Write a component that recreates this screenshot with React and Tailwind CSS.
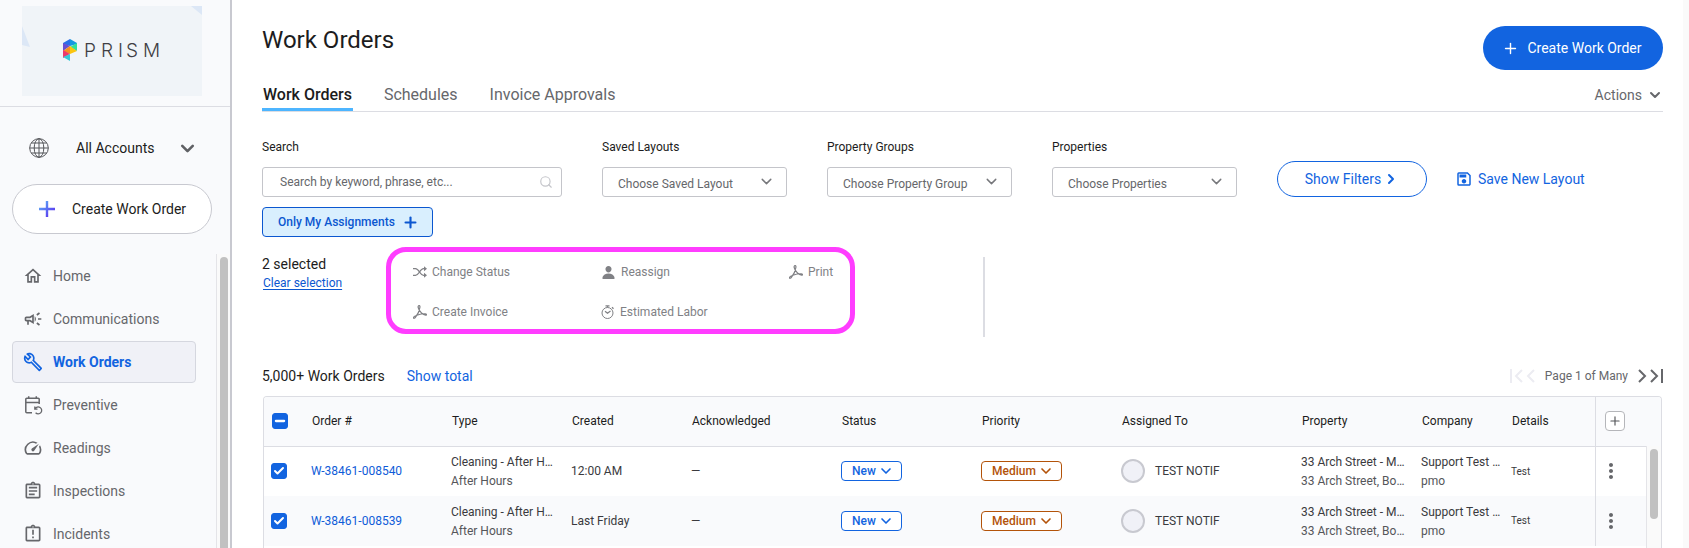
import { useState } from 'react';
import clsx from 'clsx';
import {
  MdOutlineHome,
  MdOutlineCampaign,
  MdOutlineBuild,
  MdOutlineSpeed,
  MdOutlineAssignment,
  MdOutlineAssignmentLate,
  MdOutlineSave,
  MdMoreVert,
} from 'react-icons/md';
import { IoPerson } from 'react-icons/io5';
import { Check, ChevronDown, ChevronRight, Minus, Plus, Search } from 'lucide-react';

const navItems = [
  { label: 'Home', icon: MdOutlineHome },
  { label: 'Communications', icon: MdOutlineCampaign },
  { label: 'Work Orders', icon: MdOutlineBuild, active: true },
  { label: 'Preventive', icon: CalendarRepeatIcon },
  { label: 'Readings', icon: MdOutlineSpeed },
  { label: 'Inspections', icon: MdOutlineAssignment },
  { label: 'Incidents', icon: MdOutlineAssignmentLate },
];

const tabs = ['Work Orders', 'Schedules', 'Invoice Approvals'];

const filters = [
  { id: 'layouts', label: 'Saved Layouts', placeholder: 'Choose Saved Layout' },
  { id: 'groups', label: 'Property Groups', placeholder: 'Choose Property Group' },
  { id: 'properties', label: 'Properties', placeholder: 'Choose Properties' },
];

const columns = [
  { label: 'Order #', width: 'w-[140px]' },
  { label: 'Type', width: 'w-[120px]' },
  { label: 'Created', width: 'w-[120px]' },
  { label: 'Acknowledged', width: 'w-[150px]' },
  { label: 'Status', width: 'w-[140px]' },
  { label: 'Priority', width: 'w-[140px]' },
  { label: 'Assigned To', width: 'w-[180px]' },
  { label: 'Property', width: 'w-[120px]' },
  { label: 'Company', width: 'w-[90px]' },
  { label: 'Details', width: '' },
];

const orders = [
  { id: 'W-38461-008540', created: '12:00 AM' },
  { id: 'W-38461-008539', created: 'Last Friday' },
];

function PrismMark() {
  return (
    <svg width="98" height="24" viewBox="0 0 98 24" role="img" aria-label="Prism">
      <polygon points="7,0 0,4 0,5 7,7" fill="#2a6fe8" />
      <polygon points="7,0 14,4 14,5 7,7" fill="#1599e0" />
      <polygon points="0,4 7,7 0,12" fill="#6a4fd0" />
      <polygon points="14,4 14,12 7,8" fill="#2fe29a" />
      <polygon points="7,7 0,12 7,15" fill="#f7901e" />
      <polygon points="7,7 14,12 7,15" fill="#fbc50f" />
      <polygon points="0,11 7,15 0,19" fill="#ec3a6c" />
      <polygon points="7,15 7,22 0,18" fill="#35c9d6" />
      <text
        x="21 38 55 63 80"
        y="18"
        fill="#3f3f44"
        fontFamily="Inter, sans-serif"
        fontWeight="300"
        fontSize="19"
      >
        PRISM
      </text>
    </svg>
  );
}

function GlobeIcon() {
  return (
    <svg width="20" height="20" viewBox="0 0 20 20" fill="none" stroke="#55565a">
      <circle cx="10" cy="10" r="9.3" />
      <ellipse cx="10" cy="10" rx="4.8" ry="9.3" />
      <path d="M10 .7v18.6M.7 10h18.6M2.4 5h15.2M2.4 15h15.2" />
    </svg>
  );
}

function CalendarRepeatIcon({ size }) {
  return (
    <svg width={size} height={size} viewBox="0 0 20 20" fill="none" stroke="currentColor" strokeWidth="1.5">
      <path d="M9 17.700H3.800a1 1 0 0 1-1-1V4.300a1 1 0 0 1 1-1h11.400a1 1 0 0 1 1 1V9M2.800 7.500h13.400M5.700 1.200v2.500M13.300 1.200v2.500" />
      <path d="M11.800 11.500v2.700h2.700M12 14a3.500 3.500 0 1 1 .6 3.800" strokeWidth="1.300" />
    </svg>
  );
}

function ShuffleIcon() {
  return (
    <svg width="14" height="14" viewBox="0 0 14 14" fill="none" stroke="#808185" strokeWidth="1.300">
      <path d="M0 3.700h2.500c3.500 0 4.500 6.600 8 6.600h2M0 10.300h2.500c3.500 0 4.500-6.600 8-6.600h2" />
      <path d="M11 1.200L14 3.700l-3 2.500zM11 7.800l3 2.500-3 2.500z" fill="#808185" stroke="none" />
    </svg>
  );
}

function PdfIcon() {
  return (
    <svg width="14" height="14" viewBox="0 0 14 14" fill="none" stroke="#808185" strokeWidth="1.2">
      <path d="M5.6.7c1-.5 1.5.3 1.3 1.6C6.500 5.200 4.400 10 2.400 12.400c-.7.9-1.700 1.200-1.900.6-.3-1 2-2.300 4.200-3 2.600-.9 5.600-1.400 7.500-1.200 1.600.2 1.600 1.300.5 1.400C10 10.300 6 6 5.200 2.500c-.2-.9-.1-1.500.4-1.800z" />
    </svg>
  );
}

function TimerIcon() {
  return (
    <svg width="14" height="14" viewBox="0 0 14 14" fill="none" stroke="#808185">
      <circle cx="6.500" cy="8" r="5.500" />
      <path d="M4.500.8h4M6.500.8v1.700M11 2.200l1.500 1.500M4 6.200l2.500 2 3-2.200" strokeWidth="1.300" />
    </svg>
  );
}

function PageIcon({ last, flip, className }) {
  return (
    <svg
      width={last ? 14 : 10}
      height="14"
      viewBox={last ? '0 0 14 14' : '0 0 10 14'}
      fill="none"
      stroke="currentColor"
      strokeWidth="2"
      className={clsx(flip && 'rotate-180', className)}
    >
      <path d={last ? 'M2 1l6 6-6 6M13 0v14' : 'M2 1l6 6-6 6'} />
    </svg>
  );
}

const bulkActions = [
  { label: 'Change Status', icon: <ShuffleIcon /> },
  { label: 'Reassign', icon: <IoPerson size={15} /> },
  { label: 'Print', icon: <PdfIcon /> },
  { label: 'Create Invoice', icon: <PdfIcon /> },
  { label: 'Estimated Labor', icon: <TimerIcon /> },
];

function Sidebar() {
  return (
    <aside className="flex w-[232px] shrink-0 flex-col border-r-2 border-[#c8c9d0] bg-[#f9fafc]">
      <div className="border-b border-[#dcdde3] pt-[6px] pb-[10px] pl-[22px]">
        <div className="relative flex h-[90px] w-[180px] items-center justify-center overflow-hidden bg-[#f0f4f8]">
          <svg className="absolute inset-0" width="180" height="90" fill="#dce7f6">
            <polygon points="169,0 180,0 180,9" />
            <polygon points="0,20 8,41 0,39" />
          </svg>
          <PrismMark />
        </div>
      </div>

      <button className="mt-[25px] flex h-8 items-center pl-[29px] text-sm text-[#1c1c20]">
        <GlobeIcon />
        <span className="ml-[27px] w-[101px] text-left">All Accounts</span>
        <ChevronDown size={21} strokeWidth={3} className="text-[#5f6064]" />
      </button>

      <button className="mx-3 mt-5 flex h-[50px] w-[200px] items-center rounded-full border border-[#c8c9d0] bg-white pl-[26px] text-sm text-[#1c1c20]">
        <svg width="16" height="16" viewBox="0 0 16 16">
          <defs>
            <linearGradient id="plus" x1="0" y1="0" x2="1" y2="1">
              <stop offset="0.2" stopColor="#5b9df5" />
              <stop offset="0.8" stopColor="#5b3df0" />
            </linearGradient>
          </defs>
          <path d="M6.800 0h2.400v6.800H16v2.400H9.200V16H6.800V9.200H0V6.800h6.800z" fill="url(#plus)" />
        </svg>
        <span className="ml-[17px]">Create Work Order</span>
      </button>

      <div className="mt-5 flex min-h-0 flex-1">
        <nav className="flex flex-1 flex-col gap-px overflow-hidden pt-px pr-5 pl-3">
          {navItems.map(({ label, icon: Icon, active }) => (
            <a
              key={label}
              href="#"
              className={clsx(
                'flex h-[42px] shrink-0 items-center gap-[10px] rounded border pl-[10px] text-sm',
                active
                  ? 'border-[#d5d7df] bg-[#f0f1f7] font-bold text-[#1264e0]'
                  : 'border-transparent text-[#66676b]'
              )}
            >
              <Icon size={20} />
              {label}
            </a>
          ))}
        </nav>
        <div className="w-[14px] border-l border-[#e4e4e8] bg-[#fafafa] pt-[3px] pl-[3px]">
          <div className="h-full w-2 rounded-t-full bg-[#c1c1c1]" />
        </div>
      </div>
    </aside>
  );
}

function Filters() {
  return (
    <div className="mt-[27px] flex items-end gap-10 text-xs">
      <div className="w-[300px]">
        <label htmlFor="search" className="block text-[#1c1c20]">Search</label>
        <div className="mt-3 flex h-[30px] items-center rounded-[3px] border border-[#c4c5ca] pr-2 pl-[17px]">
          <input
            id="search"
            type="text"
            placeholder="Search by keyword, phrase, etc..."
            className="min-w-0 flex-1 outline-none placeholder:text-[#66676b]"
          />
          <Search size={14} className="text-[#c4c5ca]" />
        </div>
      </div>
      {filters.map((filter) => (
        <div key={filter.id} className="w-[185px]">
          <label htmlFor={filter.id} className="block text-[#1c1c20]">{filter.label}</label>
          <div className="relative mt-3">
            <select
              id={filter.id}
              className="h-[30px] w-full appearance-none rounded-[3px] border border-[#c4c5ca] bg-white pt-1 pl-[15px] text-[#66676b]"
            >
              <option>{filter.placeholder}</option>
            </select>
            <ChevronDown size={17} className="pointer-events-none absolute top-[6px] right-3 text-[#77787c]" />
          </div>
        </div>
      ))}
      <div className="flex items-center gap-7 text-sm text-[#1264e0]">
        <button className="flex h-9 w-[150px] items-center justify-center gap-[2px] rounded-full border border-[#1264e0]">
          Show Filters
          <ChevronRight size={16} strokeWidth={3} />
        </button>
        <button className="flex items-center gap-[5px]">
          <MdOutlineSave size={18} />
          Save New Layout
        </button>
      </div>
    </div>
  );
}

function Checkbox({ checked, mixed, onChange, label }) {
  return (
    <label className="relative block size-4">
      <input
        type="checkbox"
        aria-label={label}
        checked={checked}
        onChange={onChange}
        className="block size-4 appearance-none rounded-[3px] border border-[#1264e0] checked:bg-[#1264e0]"
      />
      {checked && (
        <span className="pointer-events-none absolute inset-0 flex items-center justify-center text-white">
          {mixed ? <Minus size={14} strokeWidth={4} /> : <Check size={12} strokeWidth={4} />}
        </span>
      )}
    </label>
  );
}

function OrdersTable() {
  const [selected, setSelected] = useState([0, 1]);

  const toggle = (i) =>
    setSelected(selected.includes(i) ? selected.filter((n) => n !== i) : [...selected, i]);

  return (
    <div className="relative mx-px mt-[10px] flex-1 overflow-hidden rounded-t border border-b-0 border-[#dcdde3]">
      <table className="w-full table-fixed text-left text-xs whitespace-nowrap text-[#3a3a3e]">
        <thead>
          <tr className="h-[49px] border-b border-[#dcdde3] bg-[#f9fafc] text-[#1c1c20]">
            <th className="w-[38px] pl-2">
              <Checkbox
                label="Select all"
                checked={selected.length > 0}
                mixed
                onChange={() => setSelected([])}
              />
            </th>
            {columns.map((col) => (
              <th key={col.label} className={clsx('pl-[10px] font-normal', col.width)}>{col.label}</th>
            ))}
            <th className="w-[66px] border-l border-[#dcdde3] pl-[9px]">
              <button
                aria-label="Add column"
                className="flex size-5 items-center justify-center rounded border border-[#b5b6ba] bg-white text-[#55565a]"
              >
                <Plus size={14} />
              </button>
            </th>
          </tr>
        </thead>
        <tbody>
          {orders.map((order, i) => (
            <tr key={order.id} className="h-[50px] even:bg-[#f9fafc]">
              <td className="pl-[7px]">
                <Checkbox
                  label={`Select ${order.id}`}
                  checked={selected.includes(i)}
                  onChange={() => toggle(i)}
                />
              </td>
              <td className="pl-[9px]">
                <a href="#" className="text-[#0f5cd8]">{order.id}</a>
              </td>
              <td className="pt-[2px] pl-[9px] leading-[19px]">
                <div>Cleaning - After H…</div>
                <div className="text-[#55565a]">After Hours</div>
              </td>
              <td className="pl-[9px]">{order.created}</td>
              <td className="pl-[9px]">—</td>
              <td className="pl-[9px]">
                <button className="flex h-5 items-center gap-[2px] rounded border border-[#1264e0] bg-white pr-[7px] pl-[10px] font-medium text-[#1264e0]">
                  New
                  <ChevronDown size={16} strokeWidth={2.5} />
                </button>
              </td>
              <td className="pl-[9px]">
                <button className="flex h-5 items-center gap-[2px] rounded border border-[#b35309] bg-white pr-[7px] pl-[10px] font-medium text-[#b35309]">
                  Medium
                  <ChevronDown size={16} strokeWidth={2.5} />
                </button>
              </td>
              <td className="pl-[9px]">
                <div className="flex items-center gap-[10px]">
                  <span className="size-6 rounded-full border-2 border-[#c8c9d0] bg-[#f0f1f7]" />
                  TEST NOTIF
                </div>
              </td>
              <td className="pt-[2px] pl-[9px] leading-[19px]">
                <div>33 Arch Street - M…</div>
                <div className="text-[#55565a]">33 Arch Street, Bo…</div>
              </td>
              <td className="pt-[2px] pl-[9px] leading-[19px]">
                <div>Support Test …</div>
                <div className="text-[#55565a]">pmo</div>
              </td>
              <td className="pl-[9px] text-[10px]">Test</td>
              <td className="border-l border-[#dcdde3] pl-[3px]">
                <button aria-label="More" className="block text-[#66676b]">
                  <MdMoreVert size={24} />
                </button>
              </td>
            </tr>
          ))}
        </tbody>
      </table>
      <div className="absolute top-[49px] right-0 bottom-0 w-[15px] border-l border-[#e4e4e8] bg-[#fafafa] pt-[3px] pl-[3px]">
        <div className="h-[70px] w-2 rounded-full bg-[#c1c1c1]" />
      </div>
    </div>
  );
}

export default function App() {
  return (
    <div className="flex h-screen overflow-hidden bg-white font-[Roboto,sans-serif] text-[#1c1c20]">
      <Sidebar />

      <main className="flex min-w-0 flex-1 flex-col overflow-hidden border-r-[6px] border-[#fafafa] pr-5 pl-[30px]">
        <header className="flex items-start justify-between pt-[26px]">
          <h1 className="text-2xl leading-7">Work Orders</h1>
          <button className="flex h-11 w-[180px] items-center justify-center gap-2 rounded-full bg-[#1264e0] pr-[2px] text-sm text-white">
            <Plus size={17} />
            Create Work Order
          </button>
        </header>

        {/* Tabs */}
        <div className="mt-[9px] flex items-center justify-between border-b border-[#dcdde3]">
          <div className="flex gap-[30px]">
            {tabs.map((tab, i) => (
              <button
                key={tab}
                className={clsx(
                  'h-8 border-b-[3px] px-px pt-[2px] text-base',
                  i === 0 ? 'border-[#4db5ff] font-medium' : 'border-transparent text-[#66676b]'
                )}
              >
                {tab}
              </button>
            ))}
          </div>
          <button className="flex items-center gap-[5px] text-sm text-[#66676b]">
            Actions
            <ChevronDown size={16} strokeWidth={3} />
          </button>
        </div>

        <Filters />

        <button className="mt-[10px] flex h-[30px] shrink-0 items-center gap-[7px] self-start rounded border border-[#0b57d0] bg-[#d9effe] pr-[13px] pl-[15px] text-xs font-medium text-[#0b57d0]">
          Only My Assignments
          <Plus size={17} strokeWidth={3} />
        </button>

        {/* Bulk actions */}
        <div className="mt-[10px] flex items-start">
          <div className="w-[124px] pt-[7px]">
            <div className="text-sm">2 selected</div>
            <a href="#" className="mt-px block pl-px text-xs text-[#0b57d0] underline underline-offset-2">
              Clear selection
            </a>
          </div>
          <div className="grid w-[469px] grid-cols-[188px_188px_auto] gap-y-[22px] rounded-[20px] border-[5px] border-[#ff3dff] pt-[11px] pb-2 pl-[22px]">
            {bulkActions.map((action) => (
              <button key={action.label} className="flex h-[18px] items-center gap-[5px] text-xs text-[#808185]">
                {action.icon}
                {action.label}
              </button>
            ))}
          </div>
          <div className="mt-[10px] ml-32 h-20 w-[2px] bg-[#dcdde3]" />
        </div>

        <div className="mt-[29px] flex items-center text-sm">
          <span>5,000+ Work Orders</span>
          <button className="ml-[22px] text-[#1264e0]">Show total</button>
          <div className="ml-auto flex items-center text-xs text-[#66676b]">
            <button aria-label="First page"><PageIcon last flip className="text-[#ececf2]" /></button>
            <button aria-label="Previous page" className="ml-[2px]"><PageIcon flip className="text-[#ececf2]" /></button>
            <span className="mx-[9px]">Page 1 of Many</span>
            <button aria-label="Next page"><PageIcon /></button>
            <button aria-label="Last page" className="ml-[2px]"><PageIcon last /></button>
          </div>
        </div>

        <OrdersTable />
      </main>
    </div>
  );
}
